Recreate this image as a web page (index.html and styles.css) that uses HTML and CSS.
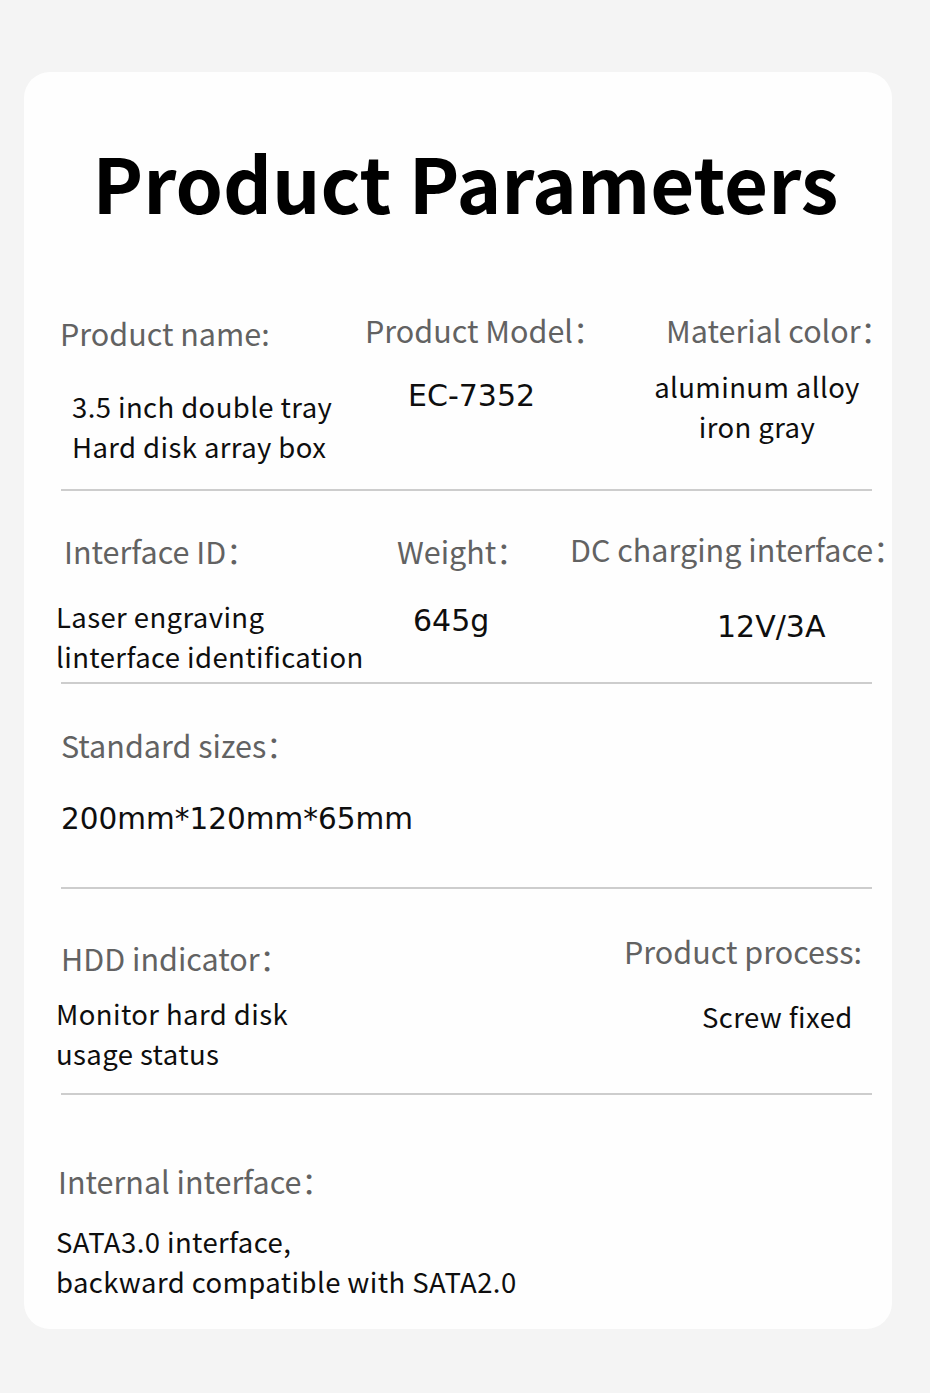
FILE: index.html
```html
<!DOCTYPE html>
<html lang="en">
<head>
<meta charset="utf-8">
<title>Product Parameters</title>
<link rel="stylesheet" href="styles.css">
</head>
<body>
<div class="card">
  <h1 class="title">Product Parameters</h1>

  <div class="row row-1">
    <div class="cell c1-1">
      <div class="label">Product name:</div>
      <div class="value">3.5 inch double tray<br>Hard disk array box</div>
    </div>
    <div class="cell c1-2">
      <div class="label">Product Model：</div>
      <div class="value num">EC-7352</div>
    </div>
    <div class="cell c1-3">
      <div class="label">Material color：</div>
      <div class="value">aluminum alloy<br>iron gray</div>
    </div>
  </div>

  <div class="row row-2">
    <div class="cell c2-1">
      <div class="label">Interface ID：</div>
      <div class="value">Laser engraving<br>linterface identification</div>
    </div>
    <div class="cell c2-2">
      <div class="label">Weight：</div>
      <div class="value num">645g</div>
    </div>
    <div class="cell c2-3">
      <div class="label">DC charging interface：</div>
      <div class="value num">12V/3A</div>
    </div>
  </div>

  <div class="row row-3">
    <div class="cell c3-1">
      <div class="label">Standard sizes：</div>
      <div class="value num">200mm*120mm*65mm</div>
    </div>
  </div>

  <div class="row row-4">
    <div class="cell c4-1">
      <div class="label">HDD indicator：</div>
      <div class="value">Monitor hard disk<br>usage status</div>
    </div>
    <div class="cell c4-2">
      <div class="label">Product process:</div>
      <div class="value">Screw fixed</div>
    </div>
  </div>

  <div class="row row-5">
    <div class="cell c5-1">
      <div class="label">Internal interface：</div>
      <div class="value">SATA3.0 interface,<br>backward compatible with SATA2.0</div>
    </div>
  </div>
</div>
</body>
</html>
```

FILE: styles.css
```css
html, body {
  margin: 0;
  padding: 0;
}

body {
  background: #f4f4f4;
  font-family: "Noto Sans CJK SC", "Noto Sans", sans-serif;
  width: 930px;
  height: 1393px;
  overflow: hidden;
}

.card {
  box-sizing: border-box;
  margin: 72px 38px 0 24px;
  width: 868px;
  height: 1257px;
  background: #fefefe;
  border-radius: 26px;
  padding-top: 54px;
}

.title {
  margin: 0;
  padding-left: 15px;
  font-size: 76px;
  line-height: 110px;
  font-weight: 700;
  color: #000;
  text-align: center;
}

.row {
  box-sizing: border-box;
  display: flex;
  align-items: flex-start;
  margin: 0 20px 0 37px;
  border-bottom: 2px solid #cdcdcd;
}

.cell {
  flex-shrink: 0;
}

.label,
.value {
  white-space: nowrap;
}

.label {
  font-size: 30.5px;
  line-height: 45px;
  color: #626262;
}

.value {
  font-size: 27.5px;
  line-height: 40px;
  font-weight: 400;
  letter-spacing: 0.4px;
  color: #0e0e0e;
}

.value.num {
  font-family: "DejaVu Sans", "Noto Sans", sans-serif;
  font-size: 30px;
  line-height: 40px;
  letter-spacing: 0;
  position: relative;
  top: 1px;
}

.c3-1 .value.num {
  font-size: 29.5px;
}

/* Row 1 */
.row-1 { height: 255px; padding-top: 72px; }
.c1-1 { width: 305px; margin-left: -1px; padding-top: 3px; }
.c1-1 .value { margin-top: 30px; padding-left: 12px; }
.c1-2 { width: 301px; }
.c1-2 .value { margin-top: 22px; padding-left: 43px; }
.c1-3 { flex: 1 1 auto; min-width: 0; }
.c1-3 .value { margin-top: 13px; margin-left: -24px; text-align: center; }

/* Row 2 */
.row-2 { height: 193px; padding-top: 38px; }
.c2-1 { width: 341px; margin-left: -5px; }
.c2-1 .label { padding-left: 8px; }
.c2-1 .value { margin-top: 22px; }
.c2-2 { width: 173px; }
.c2-2 .value { margin-top: 26px; padding-left: 16px; }
.c2-3 { flex: 1 1 auto; min-width: 0; }
.c2-3 .label { margin-top: -2px; }
.c2-3 .value { margin-top: 34px; padding-left: 147px; }

/* Row 3 */
.row-3 { height: 205px; padding-top: 39px; }
.c3-1 .value { margin-top: 30px; }

/* Row 4 */
.row-4 { height: 206px; padding-top: 40px; }
.c4-1 { width: 568px; margin-left: -5px; padding-top: 7px; }
.c4-1 .label { padding-left: 5px; }
.c4-1 .value { margin-top: 12px; }
.c4-2 { flex: 1 1 auto; min-width: 0; }
.c4-2 .value { margin-top: 22px; padding-left: 78px; }

/* Row 5 */
.row-5 { border-bottom: none; padding-top: 64px; }
.c5-1 { margin-left: -5px; }
.c5-1 .label { padding-left: 2px; }
.c5-1 .value { margin-top: 17px; }
```
